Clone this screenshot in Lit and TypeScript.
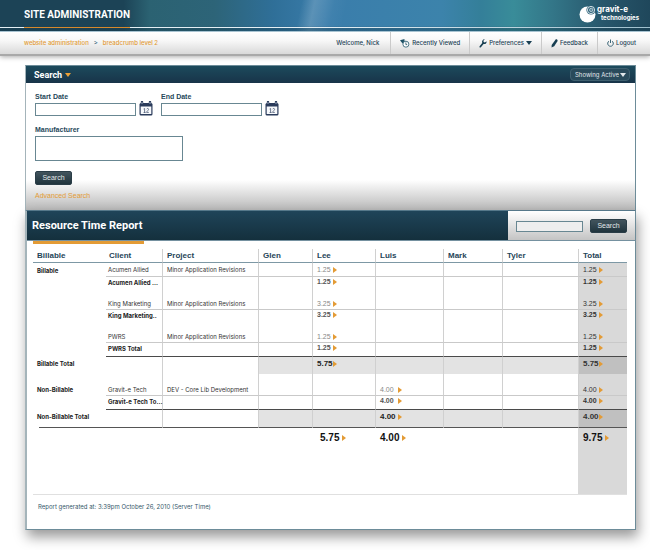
import { LitElement, html, css, svg, nothing } from "lit";
import { customElement } from "lit/decorators.js";
import { classMap } from "lit/directives/class-map.js";

type Kind = "detail" | "subtotal" | "band" | "grand";

interface Row {
  kind: Kind;
  spacing?: "gap" | "wide";
  rule?: boolean;
  label?: string;
  client?: string;
  project?: string;
  values: Record<string, string>;
}

const COLUMNS = ["Billable", "Client", "Project", "Glen", "Lee", "Luis", "Mark", "Tyler", "Total"];
const PEOPLE = COLUMNS.slice(3);

const ROWS: Row[] = [
  { kind: "detail", label: "Billable", client: "Acumen Allied", project: "Minor Application Revisions", values: { Lee: "1.25", Total: "1.25" } },
  { kind: "subtotal", client: "Acumen Allied ...", values: { Lee: "1.25", Total: "1.25" } },
  { kind: "detail", spacing: "gap", client: "King Marketing", project: "Minor Application Revisions", values: { Lee: "3.25", Total: "3.25" } },
  { kind: "subtotal", client: "King Marketing..", values: { Lee: "3.25", Total: "3.25" } },
  { kind: "detail", spacing: "gap", client: "PWRS", project: "Minor Application Revisions", values: { Lee: "1.25", Total: "1.25" } },
  { kind: "subtotal", rule: true, client: "PWRS Total", values: { Lee: "1.25", Total: "1.25" } },
  { kind: "band", label: "Billable Total", values: { Lee: "5.75", Total: "5.75" } },
  { kind: "detail", spacing: "wide", label: "Non-Billable", client: "Gravit-e Tech", project: "DEV - Core Lib Development", values: { Luis: "4.00", Total: "4.00" } },
  { kind: "subtotal", rule: true, client: "Gravit-e Tech To...", values: { Luis: "4.00", Total: "4.00" } },
  { kind: "band", label: "Non-Billable Total", values: { Luis: "4.00", Total: "4.00" } },
  { kind: "grand", values: { Lee: "5.75", Luis: "4.00", Total: "9.75" } },
];

const calendarIcon = svg`
  <svg viewBox="0 0 14 15" width="14" height="15" aria-hidden="true">
    <rect x="0.5" y="2" width="13" height="12.5" rx="1.5" fill="#2b3c5c" />
    <path d="M3 1v2M11 1v2" stroke="#2b3c5c" stroke-width="2.4" stroke-linecap="round" />
    <path d="M3 1v2M11 1v2" stroke="#b9c4d4" stroke-width="0.8" />
    <rect x="1.7" y="5.5" width="10.6" height="7.5" fill="#f7f9fc" />
    <path d="M4.6 8l1-.5v4M4.600 11.500h2M7.700 8.200c.3-1.100 2-.9 1.900.2 0 .9-1.900 1.700-2 3h2.200" fill="none" stroke="#4a5874" stroke-width="0.8" />
  </svg>`;

const clockIcon = svg`
  <svg viewBox="0 0 10 9" width="10" height="9" aria-hidden="true">
    <path d="M0 1.200L4.600 0 4.200 1.500 6.200 2.200 4 4.200 3.300 5 1.500 3.200z" fill="#1d5165" />
    <circle cx="5.900" cy="5.200" r="3" fill="#fff" stroke="#4c7788" stroke-width="1" />
    <path d="M5.900 3.400v2.200h1.300" fill="none" stroke="#1d5165" stroke-width="0.800" />
  </svg>`;

const wrenchIcon = svg`
  <svg viewBox="0 0 8 9" width="8" height="9" aria-hidden="true">
    <path d="M5.800.3L4.400 1.800l.3 1.300 1.200.4L7.500 2.200C8 4.200 6.300 5.500 4.600 5L1.900 8.300C1.100 9 0 8.100.6 7.200L3.200 4C2.500 2 3.900.1 5.800.3z" fill="#173f52" />
  </svg>`;

const pencilIcon = svg`
  <svg viewBox="0 0 7 9" width="7" height="9" aria-hidden="true">
    <path d="M4.600.5C5.400 0 6.900.8 6.600 1.900L3.200 7.300.5 8.600.7 5.900z" fill="#173f52" />
  </svg>`;

const powerIcon = svg`
  <svg viewBox="0 0 7 8" width="7" height="8" aria-hidden="true">
    <path d="M2 2.100a2.800 2.800 0 1 0 3 0" fill="none" stroke="#3b6576" stroke-width="1" />
    <path d="M3.500.5v3.500" stroke="#3b6576" stroke-width="1" />
  </svg>`;

const logoMark = svg`
  <svg viewBox="0 0 18 18" width="18" height="18" aria-hidden="true">
    <circle cx="8.500" cy="9.500" r="8" fill="#fff" />
    <circle cx="12" cy="5" r="4.600" fill="#2b6178" />
    <circle cx="12" cy="5" r="3.600" fill="none" stroke="#fff" stroke-width="0.800" />
    <circle cx="12.200" cy="4.900" r="1.700" fill="#5c899b" stroke="#dfeaee" stroke-width="0.700" />
  </svg>`;

@customElement("app-root")
export class AppRoot extends LitElement {
  static styles = css`
    :host {
      display: block;
      min-height: 100vh;
      background: #fff;
      color: #333;
      font: 6px/10px Inter, "Liberation Sans", sans-serif;
    }
    * { box-sizing: border-box; }
    h1, h2 { margin: 0; color: #fff; font-family: Roboto, sans-serif; font-weight: 700; }
    a { color: inherit; text-decoration: none; }
    svg { display: block; flex: none; }
    input, textarea, button, select { margin: 0; font: inherit; border-radius: 0; }

    .banner {
      position: relative;
      display: flex;
      justify-content: space-between;
      height: 32px;
      padding: 0 11px 0 24px;
      border-bottom: 1px solid #a9c4d2;
      background:
        linear-gradient(180deg, transparent 26px, #163b4d66 28px),
        linear-gradient(102deg, transparent 46%, #ffffff2e 48%, #ffffff08 51%, transparent 53%),
        linear-gradient(90deg, #1c4356 0%, #1c4356 19%, #2b6272 23%, #2d6478 33%, #2f6f98 42%, #3a7dab 50%, #3c83ab 68%, #347f99 74%, #398c99 79%, #337688 85%, #27566b 93%, #1f475b 100%);
    }
    .banner::before {
      content: "";
      position: absolute;
      inset: 27px 0 auto 0;
      height: 1px;
      background: linear-gradient(90deg, #e4eff4 50%, #9fc0ce);
    }
    .brand {
      position: relative;
      height: 28px;
      padding-top: 8px;
      border-bottom: 1px solid #d6892c;
      font-size: 10px;
      line-height: 14px;
    }
    .logo { display: flex; align-items: start; gap: 0; padding-top: 5px; color: #fff; font-weight: 700; }
    .logo-text { display: grid; font-size: 8px; line-height: 9px; }
    .logo-sub { padding-left: 4px; font-size: 6px; line-height: 8px; }

    .bar {
      display: flex;
      justify-content: space-between;
      height: 24px;
      padding-left: 24px;
      border-bottom: 2px solid #a9a9a9;
      background: linear-gradient(#fff, #f7f7f7 40%, #d9d9d9);
      box-shadow: 0 1px 5px #0005;
    }
    .crumbs { display: flex; align-items: center; gap: 5px; color: #e39b35; font-weight: 500; }
    .crumb-sep { color: #2c6078; }
    .menu { display: flex; color: #1a4053; font-weight: 500; }
    .menu-item {
      display: flex;
      align-items: center;
      gap: 2px;
      padding: 0 9px;
      border: 0;
      border-left: 1px solid #cacaca;
      background: none;
      color: inherit;
    }
    .menu-item:first-child { padding-right: 11px; border-left: 0; }
    .menu-item:last-child { padding-right: 14px; }
    .down {
      width: 0;
      border: 3px solid transparent;
      border-top: 4px solid currentColor;
      border-bottom: 0;
    }

    .page { margin: 9px 14px 21px 25px; }
    .filter { border: 1px solid #6d8c99; border-left-color: #a4b4ba; border-bottom: 0; }
    .filter-head {
      display: flex;
      align-items: center;
      justify-content: space-between;
      height: 17px;
      padding: 0 5px 0 8px;
      background: linear-gradient(#1c4a5c, #183449);
    }
    .filter-title { display: flex; align-items: center; gap: 3px; font-size: 9px; line-height: 12px; }
    .filter-title .down { color: #eea136; }
    .state { position: relative; display: flex; align-items: center; color: #e2e8eb; }
    .state select {
      appearance: none;
      height: 13px;
      padding: 0 10px 0 4px;
      border: 1px solid #3f6070;
      border-radius: 4px;
      background: #294a5b;
      color: inherit;
      line-height: 10px;
    }
    .state .down { position: absolute; right: 4px; }

    .filter-body {
      display: grid;
      justify-items: start;
      align-content: start;
      min-height: 127px;
      padding: 10px 9px 9px;
      background: linear-gradient(#fff calc(100% - 30px), #b9b9b9);
    }
    .field { display: grid; }
    .field label { color: #26485a; font: 700 7px/8px "Liberation Sans", sans-serif; }
    .dates { display: flex; gap: 8px; }
    .with-icon { display: flex; align-items: end; gap: 3px; }
    .box { display: block; height: 13px; padding: 0 3px; border: 1px solid #688792; background: #fff; }
    .date { width: 101px; }
    .picker { padding: 0; border: 0; background: none; }
    .area { width: 148px; height: 25px; resize: none; }
    .go {
      width: 37px;
      height: 14px;
      padding: 0;
      border: 1px solid #2a3d47;
      border-radius: 2px;
      background: linear-gradient(#42545d, #20343d);
      color: #e4e8ea;
      font: 7px/10px "Liberation Sans", sans-serif;
    }
    .manufacturer { gap: 2px; margin-top: 10px; }
    .filter-body .go { margin-top: 10px; }
    .advanced { margin-top: 6px; color: #e39b35; font: 7px/10px "Liberation Sans", sans-serif; }

    .report {
      border: 1px solid #6d8c99;
      border-left: 2px solid #a4b4ba;
      border-top-color: #56788a;
      background: #fff;
      box-shadow: 2px 7px 12px #0006;
    }
    .report-head { display: flex; height: 30px; border-bottom: 1px solid #7591a0; background: linear-gradient(#1f4459, #14303d); }
    .report-title { flex: 1; padding-left: 5px; font-size: 11px; line-height: 29px; }
    .quick {
      display: flex;
      align-items: center;
      gap: 7px;
      padding: 1px 8px 0;
      background: linear-gradient(#fff, #eee 30%, #c4c4c4);
    }
    .quick .box { width: 67px; height: 11px; background: #eee; }
    .accent { width: 111px; height: 3px; margin-left: 6px; background: #e39b35; }

    .table-wrap { padding: 5px 9px 0 6px; }
    table { width: 100%; table-layout: fixed; border-collapse: separate; border-spacing: 0; border-bottom: 1px solid #e0e0e0; }
    .c0 { width: 73px; }
    .c1 { width: 56px; }
    .c2 { width: 96px; }
    .c3 { width: 54px; }
    .c4 { width: 63px; }
    .c5 { width: 68px; }
    .c6 { width: 59px; }
    .c7 { width: 76px; }
    .c8 { width: 49px; }
    th, td { padding: 0; text-align: left; white-space: nowrap; }
    thead th {
      height: 14px;
      padding: 1px 0 0 4px;
      border-bottom: 1px solid #7d98a5;
      color: #1f4558;
      font: 700 8px/12px "Liberation Sans", sans-serif;
    }
    thead th:nth-child(2) { padding-left: 3px; }
    th:nth-child(n + 3), td:nth-child(n + 3) { border-left: 1px solid #d0d0d0; }
    tbody th, tbody td { height: 14px; padding: 0 0 0 4px; line-height: 10px; vertical-align: bottom; }
    tbody td:nth-child(2) { padding-left: 2px; }
    tbody th { color: #222; font-weight: 700; }
    tbody td:last-child { background: #d9d9d9; color: #333; }
    .detail td:nth-child(n + 2) { border-bottom: 1px solid #c9c9c9; }
    .detail td { color: #333; }
    .detail th { padding-bottom: 1px; }
    .detail.tight td, .detail.tight th { padding-bottom: 1px; }
    .gap td, .gap th { height: 19px; }
    .wide td, .wide th { height: 22px; }
    .subtotal td { vertical-align: top; font-weight: 700; color: #222; }
    .subtotal td:nth-child(2) { padding-top: 1px; }
    .rule td:nth-child(n + 2) { border-bottom: 1px solid #4a4a4a; }
    .band td, .band th { height: 17px; padding-bottom: 3px; vertical-align: middle; }
    .band td { font: 700 8px/10px "Liberation Sans", sans-serif; color: #222; }
    .band td:nth-child(n + 4) { background: #e3e3e3; }
    .band td:last-child { background: #c0c0c0; }
    .num { display: inline-flex; align-items: center; font-family: "Liberation Sans", sans-serif; }
    .detail .num, .subtotal .num { font-size: 7px; }
    .figure { min-width: 16px; }
    .Luis .figure { min-width: 18px; }
    .detail .Lee, .detail .Luis { color: #888; }
    .subtotal .Lee, .subtotal .Luis { color: #555; }
    .right {
      height: 6px;
      border: 3px solid transparent;
      border-left: 4px solid #e39b35;
      border-right: 0;
    }
    .grand td, .grand th { height: 67px; padding-top: 3px; vertical-align: top; border-top: 1px solid #555; border-left-color: transparent; }
    .grand th { border-top: 0; background: linear-gradient(#555, #555) 6px 0 / 100% 1px no-repeat; }
    .grand td { font-weight: 700; font-size: 10px; line-height: 12px; color: #111; }
    .grand td:last-child { color: #111; }
    .grand .num { gap: 3px; }
    .grand .Lee { padding-left: 7px; }

    .stamp { margin: 0; padding: 7px 0 17px 11px; color: #35586a; }
  `;

  private renderRow(row: Row) {
    const classes = { [row.kind]: true, [row.spacing ?? "tight"]: true, rule: !!row.rule };
    return html`
      <tr class=${classMap(classes)}>
        <th scope="row">${row.label ?? nothing}</th>
        <td>${row.client ?? nothing}</td>
        <td>${row.project ?? nothing}</td>
        ${PEOPLE.map((name) => html`<td class=${name}>${row.values[name]
          ? html`<a class="num" href="#"><span class="figure">${row.values[name]}</span><span class="right"></span></a>`
          : nothing}</td>`)}
      </tr>`;
  }

  private renderDate(id: string, label: string) {
    return html`
      <div class="field">
        <label for=${id}>${label}</label>
        <div class="with-icon">
          <input class="box date" id=${id} type="text" />
          <button class="picker" type="button" aria-label=${`Pick ${label}`}>${calendarIcon}</button>
        </div>
      </div>`;
  }

  render() {
    return html`
      <header class="banner">
        <h1 class="brand">SITE ADMINISTRATION</h1>
        <div class="logo">
          ${logoMark}
          <div class="logo-text"><span>gravit-e</span><span class="logo-sub">technologies</span></div>
        </div>
      </header>
      <div class="bar">
        <nav class="crumbs" aria-label="Breadcrumb">
          <a href="#">website administration</a><span class="crumb-sep">&gt;</span><a href="#">breadcrumb level 2</a>
        </nav>
        <nav class="menu" aria-label="Account">
          <span class="menu-item">Welcome, Nick</span>
          <a class="menu-item" href="#">${clockIcon}Recently Viewed</a>
          <button class="menu-item" type="button">${wrenchIcon}Preferences<span class="down"></span></button>
          <a class="menu-item" href="#">${pencilIcon}Feedback</a>
          <a class="menu-item" href="#">${powerIcon}Logout</a>
        </nav>
      </div>
      <main class="page">
        <section class="filter">
          <div class="filter-head">
            <h2 class="filter-title">Search<span class="down"></span></h2>
            <div class="state">
              <select aria-label="Status"><option>Showing Active</option></select>
              <span class="down"></span>
            </div>
          </div>
          <form class="filter-body">
            <div class="dates">${this.renderDate("start", "Start Date")}${this.renderDate("end", "End Date")}</div>
            <div class="field manufacturer">
              <label for="maker">Manufacturer</label>
              <textarea class="box area" id="maker"></textarea>
            </div>
            <button class="go" type="button">Search</button>
            <a class="advanced" href="#">Advanced Search</a>
          </form>
        </section>
        <section class="report">
          <div class="report-head">
            <h2 class="report-title">Resource Time Report</h2>
            <form class="quick">
              <input class="box" type="text" aria-label="Search report" />
              <button class="go" type="button">Search</button>
            </form>
          </div>
          <div class="accent"></div>
          <div class="table-wrap">
            <table>
              <thead>
                <tr>${COLUMNS.map((name, i) => html`<th scope="col" class=${`c${i}`}>${name}</th>`)}</tr>
              </thead>
              <tbody>${ROWS.map((row) => this.renderRow(row))}</tbody>
            </table>
          </div>
          <p class="stamp">Report generated at: 3:39pm October 26, 2010 (Server Time)</p>
        </section>
      </main>`;
  }
}
